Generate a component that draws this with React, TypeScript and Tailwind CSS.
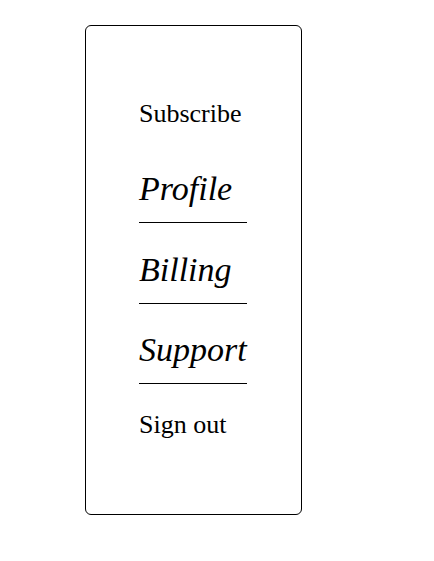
const items = [
  { label: 'Subscribe', big: false },
  { label: 'Profile', big: true },
  { label: 'Billing', big: true },
  { label: 'Support', big: true },
  { label: 'Sign out', big: false },
];

export default function App() {
  return (
    <div className="min-h-screen bg-white pl-[85px] pt-[25px] font-['Liberation_Serif',serif] text-black">
      <nav className="h-[490px] w-[217px] rounded-[6px] border border-black pl-[53px] pt-[47px]">
        <ul className="flex w-fit flex-col">
          {items.map((item) =>
            item.big ? (
              <li key={item.label} className="border-b border-black pb-[13px] pt-[26.5px] text-[34px] italic leading-[40px]">
                {item.label}
              </li>
            ) : (
              <li key={item.label} className="pb-[13.5px] pt-[26px] text-[26px] leading-[30px]">
                {item.label}
              </li>
            ),
          )}
        </ul>
      </nav>
    </div>
  );
}
